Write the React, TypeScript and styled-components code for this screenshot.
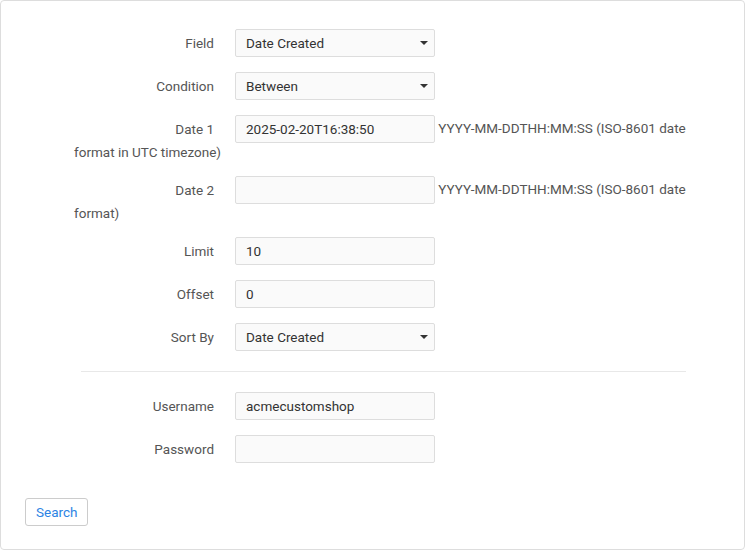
import styled, { createGlobalStyle } from 'styled-components'

const GlobalStyle = createGlobalStyle`
  html, body {
    margin: 0;
    padding: 0;
    background: #fff;
  }
  body {
    font-family: Roboto, "Liberation Sans", sans-serif;
    font-size: 13.5px;
    color: #333;
  }
`

type Field = {
  label: string
  kind: 'select' | 'input'
  value: string
  help?: string
}

const searchFields: Field[] = [
  { label: 'Field', kind: 'select', value: 'Date Created' },
  { label: 'Condition', kind: 'select', value: 'Between' },
  {
    label: 'Date 1',
    kind: 'input',
    value: '2025-02-20T16:38:50',
    help: 'YYYY-MM-DDTHH:MM:SS (ISO-8601 date format in UTC timezone)',
  },
  {
    label: 'Date 2',
    kind: 'input',
    value: '',
    help: 'YYYY-MM-DDTHH:MM:SS (ISO-8601 date format)',
  },
  { label: 'Limit', kind: 'input', value: '10' },
  { label: 'Offset', kind: 'input', value: '0' },
  { label: 'Sort By', kind: 'select', value: 'Date Created' },
]

const authFields: Field[] = [
  { label: 'Username', kind: 'input', value: 'acmecustomshop' },
  { label: 'Password', kind: 'input', value: '' },
]

const FormRow = ({ field }: { field: Field }) => {
  return (
    <Row>
      <Label>{field.label}</Label>
      {field.kind === 'select' ? (
        <SelectBox>
          <span>{field.value}</span>
          <Caret />
        </SelectBox>
      ) : (
        <InputBox>{field.value}</InputBox>
      )}
      {field.help && <Help> {field.help}</Help>}
    </Row>
  )
}

export default function App() {
  return (
    <>
      <GlobalStyle />
      <Card>
        <Fields>
          {searchFields.map((f) => (
            <FormRow key={f.label} field={f} />
          ))}
          <Divider />
          {authFields.map((f) => (
            <FormRow key={f.label} field={f} />
          ))}
        </Fields>
        <Footer>
          <SearchButton>Search</SearchButton>
        </Footer>
      </Card>
    </>
  )
}

const Card = styled.div`
  box-sizing: border-box;
  width: 745px;
  height: 550px;
  border: 1px solid #ddd;
  border-radius: 4px;
  padding-top: 28px;
`

const Fields = styled.div`
  margin: 0 58px 0 73px;
`

const Row = styled.div`
  line-height: 18px;
  margin-bottom: 15px;
  color: #555;
`

const Label = styled.label`
  display: inline-block;
  box-sizing: border-box;
  width: 161px;
  padding-right: 21px;
  text-align: right;
  vertical-align: middle;
  color: #555;
`

const InputBox = styled.div`
  display: inline-block;
  box-sizing: border-box;
  width: 200px;
  height: 28px;
  line-height: 26px;
  padding: 0 10px;
  border: 1px solid #ddd;
  border-radius: 2px;
  background: #fafafa;
  color: #333;
  vertical-align: middle;
`

const SelectBox = styled(InputBox)`
  position: relative;
`

const Caret = styled.span`
  position: absolute;
  right: 6px;
  top: 11px;
  width: 0;
  height: 0;
  border-left: 4px solid transparent;
  border-right: 4px solid transparent;
  border-top: 4px solid #333;
`

const Help = styled.span`
  color: #555;
`

const Divider = styled.div`
  height: 1px;
  background: #e8e8e8;
  margin: 20px 0 20px 7px;
`

const Footer = styled.div`
  padding: 20px 24px 0;
`

const SearchButton = styled.button`
  box-sizing: border-box;
  height: 28px;
  padding: 0 10px;
  font-family: Roboto, "Liberation Sans", sans-serif;
  font-size: 13.5px;
  color: #2d84e4;
  background: #fff;
  border: 1px solid #ccc;
  border-radius: 3px;
  cursor: pointer;
`
